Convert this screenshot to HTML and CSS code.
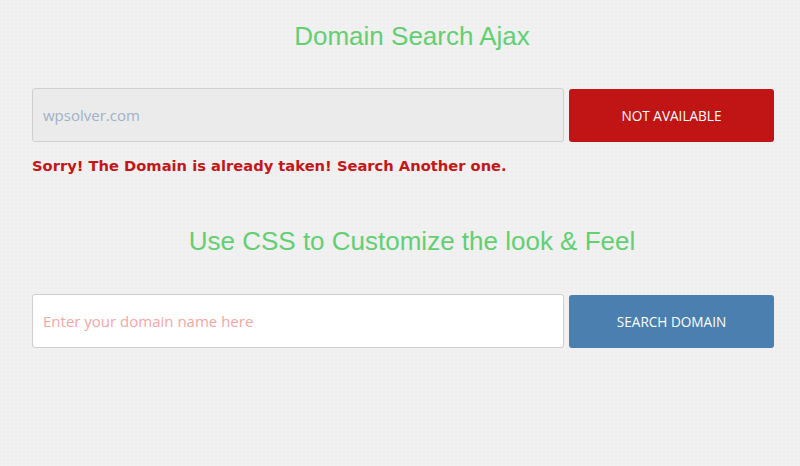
FILE: index.html
```html
<!DOCTYPE html>
<html>
<head>
<meta charset="utf-8">
<link rel="stylesheet" href="styles.css">
</head>
<body>
<div class="page">
  <h2 class="title">Domain Search Ajax</h2>
  <form class="search">
    <input class="field taken" type="text" value="wpsolver.com">
    <button class="btn btn-red" type="button">NOT AVAILABLE</button>
  </form>
  <p class="error">Sorry! The Domain is already taken! Search Another one.</p>
  <h2 class="title title2">Use CSS to Customize the look &amp; Feel</h2>
  <form class="search">
    <input class="field" type="text" placeholder="Enter your domain name here">
    <button class="btn btn-blue" type="button">SEARCH DOMAIN</button>
  </form>
</div>
</body>
</html>
```
FILE: styles.css
```css
html, body {
  margin: 0;
  padding: 0;
}
body {
  background-color: #efefef;
  background-image: radial-gradient(#f7f7f7 0.6px, transparent 0.8px);
  background-size: 4px 4px;
  width: 800px;
  height: 466px;
  overflow: hidden;
  font-family: "Open Sans", "Liberation Sans", sans-serif;
}
.page {
  padding: 21px 26px 0 32px;
}
.title {
  margin: 0;
  font-family: "Liberation Sans", Arial, sans-serif;
  font-weight: normal;
  font-size: 26px;
  line-height: 30px;
  color: #62cf72;
  text-align: center;
  padding-left: 18px;
}
.title2 {
  margin-top: 50px;
}
.title2 + .search {
  margin-top: 38px;
}
.search {
  display: flex;
  gap: 5px;
  margin: 37px 0 0 0;
  height: 54px;
  width: 742px;
}
.field {
  flex: 0 0 532px;
  box-sizing: border-box;
  height: 54px;
  margin: 0;
  border: 1px solid #cfcfcf;
  border-radius: 3px;
  background: #ffffff;
  padding: 0 10px;
  font-family: "Open Sans", sans-serif;
  font-size: 15px;
  color: #555;
  outline: none;
}
.field.taken {
  background: #ebebeb;
  color: #9fb1c6;
}
.field::placeholder {
  color: #f7a6a6;
  opacity: 1;
}
.btn {
  flex: 1;
  box-sizing: border-box;
  height: 53px;
  margin-top: 1px;
  border: none;
  border-radius: 3px;
  color: #ffffff;
  font-family: "Open Sans", sans-serif;
  font-size: 13.6px;
  cursor: pointer;
}
.btn-red {
  background: #c11414;
}
.btn-blue {
  background: #4a7faf;
}
.error {
  margin: 14px 0 0 0;
  font-family: "DejaVu Sans", Verdana, sans-serif;
  font-weight: bold;
  font-size: 14.7px;
  line-height: 20px;
  color: #c41616;
}
```
